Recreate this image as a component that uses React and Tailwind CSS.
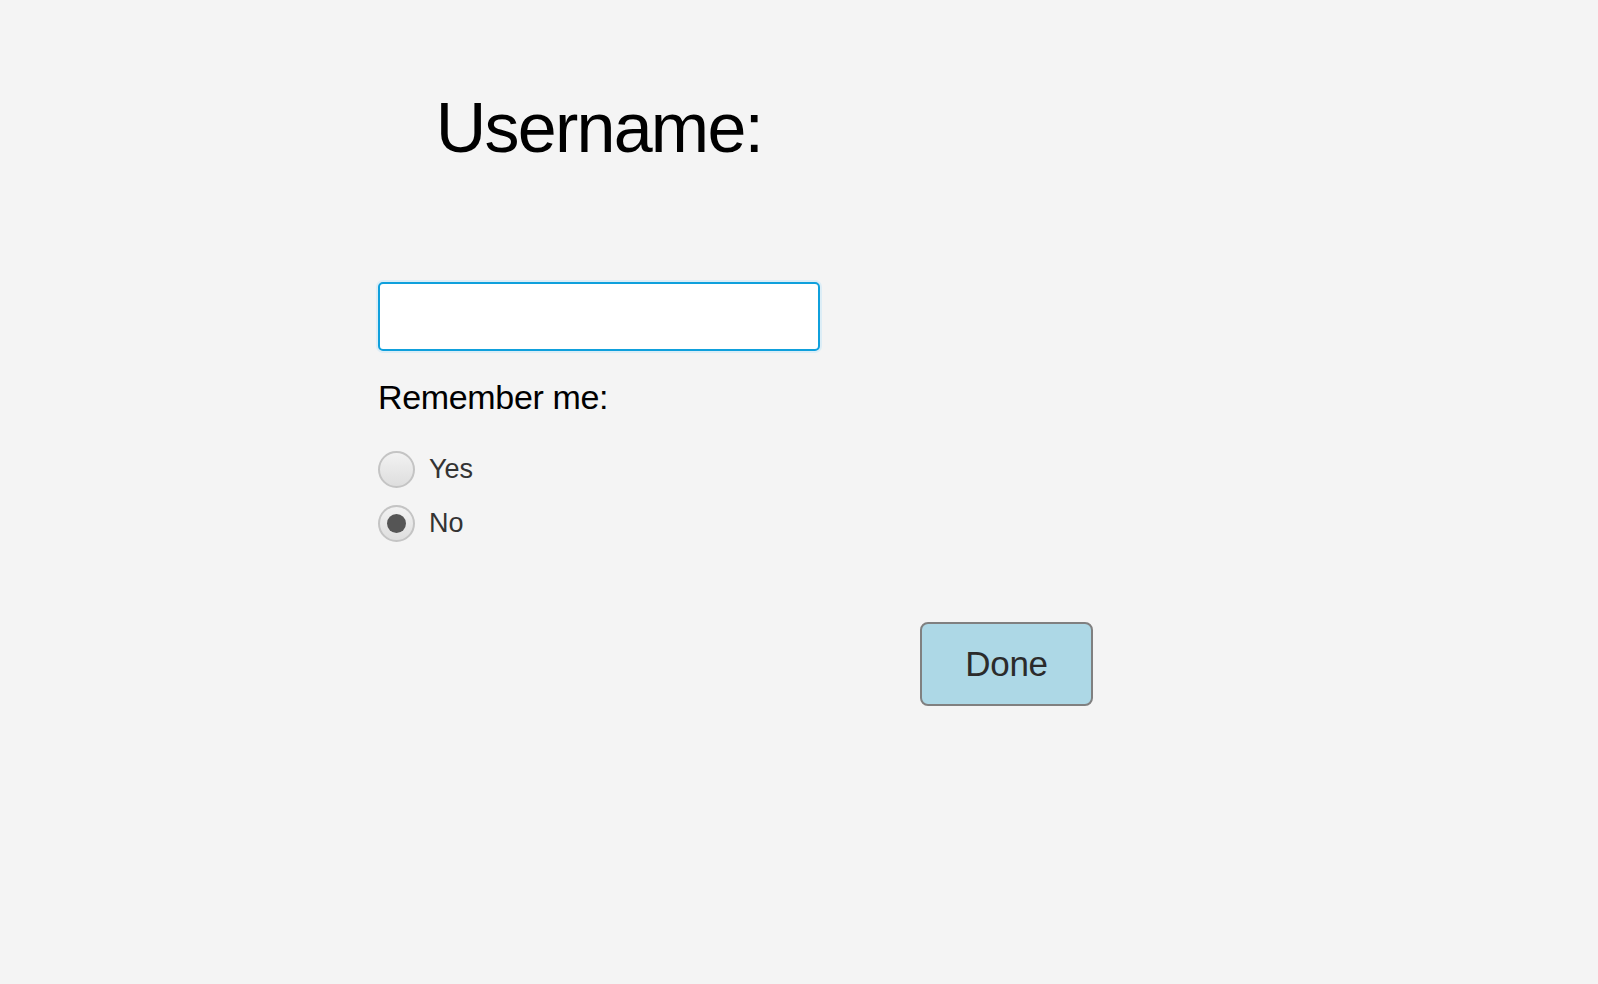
export default function App() {
  return (
    <div className="min-h-[984px] w-full bg-[#f4f4f4] font-['Liberation_Sans',Arial,sans-serif]">
      <div className="flex flex-col pl-[378px] pt-[93px]">
        <div className="w-[442px] flex flex-col">
          <h1 className="text-center text-[70px] leading-[70px] tracking-[-0.025em] text-black">
            Username:
          </h1>
          <input
            type="text"
            className="mt-[119px] h-[69px] w-[442px] rounded-[5px] border-2 border-[#0fa0dc] bg-white px-3 text-[26px] outline-none shadow-[0_0_0_2px_#dcedf6]"
          />
          <div className="mt-[26px] text-[34px] leading-[40px] tracking-[-0.01em] text-black">
            Remember me:
          </div>
          <div className="mt-[34px] flex flex-col gap-[17px]">
            <label className="flex items-center gap-[14px]">
              <span className="flex h-[37px] w-[37px] items-center justify-center rounded-full border-2 border-[#c4c4c4] bg-gradient-to-b from-[#f2f2f2] to-[#dedede]" />
              <span className="text-[27px] leading-[37px] text-[#333333]">Yes</span>
            </label>
            <label className="flex items-center gap-[14px]">
              <span className="flex h-[37px] w-[37px] items-center justify-center rounded-full border-2 border-[#c4c4c4] bg-gradient-to-b from-[#f2f2f2] to-[#dedede]">
                <span className="h-[19px] w-[19px] rounded-full bg-[#555555]" />
              </span>
              <span className="text-[27px] leading-[37px] text-[#333333]">No</span>
            </label>
          </div>
        </div>
        <div className="mt-[80px] pl-[542px]">
          <button className="flex h-[84px] w-[173px] items-center justify-center rounded-[8px] border-2 border-[#808080] bg-[#add8e6] text-[35px] tracking-[-0.01em] text-[#2b2b2b]">
            Done
          </button>
        </div>
      </div>
    </div>
  )
}
